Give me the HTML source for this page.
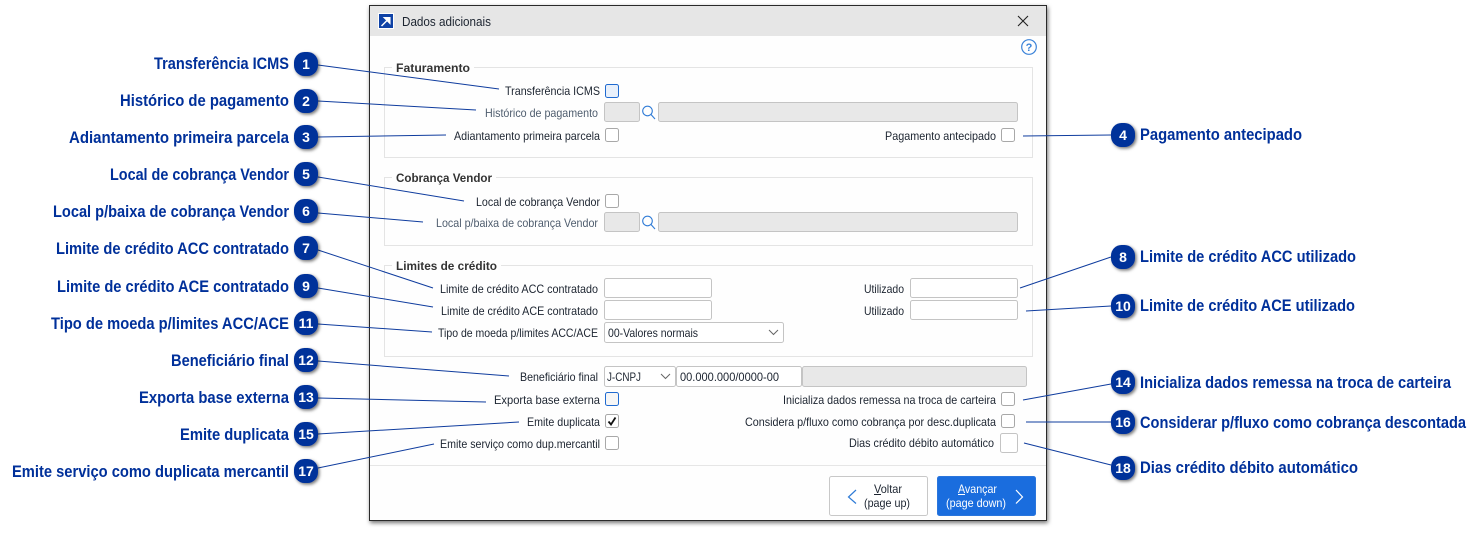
<!DOCTYPE html>
<html lang="pt"><head><meta charset="utf-8"><title>Dados adicionais</title>
<style>
html,body{margin:0;padding:0;background:#fff;width:1482px;height:537px;overflow:hidden}
svg{display:block}
text{font-family:"Liberation Sans",sans-serif}
.c{font-size:16.5px;font-weight:bold;fill:#00309a}
.l{font-size:12px;fill:#1c2430}
.d{font-size:12px;fill:#4f5d6e}
.g{font-size:12px;font-weight:bold;fill:#333}
.n{font-size:14px;font-weight:bold;fill:#fff;text-anchor:middle}
.cb{fill:#fff;stroke:#a8a8a8;stroke-width:1}
.in{fill:#fff;stroke:#c4c4c4;stroke-width:1}
.ds{fill:#e8e8e8;stroke:#c4c4c4;stroke-width:1}
.box{fill:none;stroke:#e4e4e4;stroke-width:1}
.ln{stroke:#0f3c9e;stroke-width:1;fill:none}
.b{fill:#00309a}
</style></head><body>
<svg width="1482" height="537" viewBox="0 0 1482 537" xmlns="http://www.w3.org/2000/svg">
<defs>
<filter id="s" x="-40%" y="-40%" width="190%" height="190%"><feDropShadow dx="1.5" dy="1.5" stdDeviation="1.5" flood-color="#000" flood-opacity=".55"/></filter>
<filter id="w" x="-3%" y="-3%" width="106%" height="106%"><feDropShadow dx="1" dy="2" stdDeviation="2" flood-color="#000" flood-opacity=".55"/></filter>
</defs>

<!-- dialog -->
<rect x="369.500" y="5.500" width="677" height="515" fill="#fefefe" stroke="#2a2a2a" filter="url(#w)"/>
<rect x="370" y="6" width="676" height="30" fill="#e6e6e6"/>
<rect x="378" y="13" width="16" height="16" fill="#fff"/>
<rect x="379" y="14" width="14" height="14" fill="#0f42a6"/>
<path d="M381.500 26l7-7M384.500 17.800h5.300v5.300z" stroke="#fff" stroke-width="1.500" fill="#fff"/>
<text x="402" y="26" class="l" textLength="89" lengthAdjust="spacingAndGlyphs" style="font-size:13px">Dados adicionais</text>
<path d="M1018 16l10 10M1028 16l-10 10" stroke="#222" stroke-width="1.100" fill="none"/>
<circle cx="1029" cy="47" r="7.300" fill="none" stroke="#3a82d8" stroke-width="1.200"/>
<text x="1029" y="51" text-anchor="middle" style="font-size:11px;font-weight:bold;fill:#3a82d8">?</text>

<!-- groups -->
<rect x="384.500" y="67.500" width="648" height="90" class="box"/>
<rect x="392" y="62" width="82" height="12" fill="#fefefe"/>
<text x="396" y="72" class="g" textLength="74" lengthAdjust="spacingAndGlyphs">Faturamento</text>
<rect x="384.500" y="177.500" width="648" height="68" class="box"/>
<rect x="392" y="172" width="104" height="12" fill="#fefefe"/>
<text x="396" y="182" class="g" textLength="96" lengthAdjust="spacingAndGlyphs">Cobrança Vendor</text>
<rect x="384.500" y="265.500" width="648" height="91" class="box"/>
<rect x="392" y="260" width="109" height="12" fill="#fefefe"/>
<text x="396" y="270" class="g" textLength="101" lengthAdjust="spacingAndGlyphs">Limites de crédito</text>

<!-- row labels -->
<g>
<text x="505" y="95" class="l" textLength="95" lengthAdjust="spacingAndGlyphs">Transferência ICMS</text>
<text x="485" y="117" class="d" textLength="113" lengthAdjust="spacingAndGlyphs">Histórico de pagamento</text>
<text x="454" y="140" class="l" textLength="146" lengthAdjust="spacingAndGlyphs">Adiantamento primeira parcela</text>
<text x="885" y="140" class="l" textLength="111" lengthAdjust="spacingAndGlyphs">Pagamento antecipado</text>
<text x="476" y="206" class="l" textLength="124" lengthAdjust="spacingAndGlyphs">Local de cobrança Vendor</text>
<text x="436" y="227" class="d" textLength="162" lengthAdjust="spacingAndGlyphs">Local p/baixa de cobrança Vendor</text>
<text x="440" y="293" class="l" textLength="158" lengthAdjust="spacingAndGlyphs">Limite de crédito ACC contratado</text>
<text x="441" y="315" class="l" textLength="157" lengthAdjust="spacingAndGlyphs">Limite de crédito ACE contratado</text>
<text x="438" y="337" class="l" textLength="160" lengthAdjust="spacingAndGlyphs">Tipo de moeda p/limites ACC/ACE</text>
<text x="864" y="293" class="l" textLength="40" lengthAdjust="spacingAndGlyphs">Utilizado</text>
<text x="864" y="315" class="l" textLength="40" lengthAdjust="spacingAndGlyphs">Utilizado</text>
<text x="520" y="381" class="l" textLength="78" lengthAdjust="spacingAndGlyphs">Beneficiário final</text>
<text x="494" y="404" class="l" textLength="106" lengthAdjust="spacingAndGlyphs">Exporta base externa</text>
<text x="527" y="426" class="l" textLength="73" lengthAdjust="spacingAndGlyphs">Emite duplicata</text>
<text x="440" y="448" class="l" textLength="160" lengthAdjust="spacingAndGlyphs">Emite serviço como dup.mercantil</text>
<text x="783" y="404" class="l" textLength="213" lengthAdjust="spacingAndGlyphs">Inicializa dados remessa na troca de carteira</text>
<text x="745" y="426" class="l" textLength="251" lengthAdjust="spacingAndGlyphs">Considera p/fluxo como cobrança por desc.duplicata</text>
<text x="849" y="447" class="l" textLength="145" lengthAdjust="spacingAndGlyphs">Dias crédito débito automático</text>
</g>

<!-- controls -->
<rect x="605.500" y="84.500" width="13" height="13" rx="2" fill="#e8f0fb" stroke="#1f6ad0"/>
<rect x="604.500" y="102.500" width="35" height="19" rx="2" class="ds"/>
<circle cx="647.500" cy="111" r="4.800" fill="none" stroke="#2f7bd6" stroke-width="1.100"/><path d="M651 114.500l4 4.500" stroke="#2f7bd6" stroke-width="1.100"/>
<rect x="658.500" y="102.500" width="359" height="19" rx="2" class="ds"/>
<rect x="605.500" y="128.500" width="13" height="13" rx="2" class="cb"/>
<rect x="1001.500" y="128.500" width="13" height="13" rx="2" class="cb"/>

<rect x="605.500" y="194.500" width="13" height="13" rx="2" class="cb"/>
<rect x="604.500" y="212.500" width="35" height="19" rx="2" class="ds"/>
<circle cx="647.500" cy="221" r="4.800" fill="none" stroke="#2f7bd6" stroke-width="1.100"/><path d="M651 224.500l4 4.500" stroke="#2f7bd6" stroke-width="1.100"/>
<rect x="658.500" y="212.500" width="359" height="19" rx="2" class="ds"/>

<rect x="604.500" y="278.500" width="107" height="19" rx="2" class="in"/>
<rect x="604.500" y="300.500" width="107" height="19" rx="2" class="in"/>
<rect x="910.500" y="278.500" width="107" height="19" rx="2" class="in"/>
<rect x="910.500" y="300.500" width="107" height="19" rx="2" class="in"/>
<rect x="604.500" y="322.500" width="179" height="20" rx="2" class="in"/>
<text x="608" y="337" class="l" textLength="90" lengthAdjust="spacingAndGlyphs">00-Valores normais</text>
<path d="M769 330l4.500 4.500 4.500-4.500" fill="none" stroke="#666"/>

<rect x="604.500" y="366.500" width="71" height="20" rx="2" class="in"/>
<text x="607" y="381" class="l" textLength="34" lengthAdjust="spacingAndGlyphs">J-CNPJ</text>
<path d="M661 374l4.500 4.500 4.500-4.500" fill="none" stroke="#666"/>
<rect x="676.500" y="366.500" width="125" height="20" rx="2" class="in"/>
<text x="680" y="381" class="l" textLength="99" lengthAdjust="spacingAndGlyphs">00.000.000/0000-00</text>
<rect x="802.500" y="366.500" width="224" height="20" rx="2" class="ds"/>

<rect x="605.500" y="392.500" width="13" height="13" rx="2" fill="#f6f6f6" stroke="#1f6ad0"/>
<rect x="605.500" y="414.500" width="13" height="13" rx="2" class="cb"/>
<path d="M608.500 421.500l2.500 3 4.500-7" fill="none" stroke="#111" stroke-width="1.800"/>
<rect x="605.500" y="436.500" width="13" height="13" rx="2" class="cb"/>
<rect x="1001.500" y="392.500" width="13" height="13" rx="2" class="cb"/>
<rect x="1001.500" y="414.500" width="13" height="13" rx="2" class="cb"/>
<rect x="1000.500" y="433.500" width="17" height="19" rx="2" class="in"/>

<!-- footer -->
<rect x="370" y="465" width="676" height="1" fill="#e6e6e6"/>
<rect x="829.500" y="476.500" width="98" height="39" rx="2" fill="#fff" stroke="#c8c8c8"/>
<path d="M856 490l-7.500 7 7.500 6.500" fill="none" stroke="#2f7bd6" stroke-width="1.200"/>
<text x="874" y="493" class="l" textLength="28" lengthAdjust="spacingAndGlyphs">Voltar</text>
<rect x="874" y="494" width="7" height="1" fill="#1c2430"/>
<text x="864" y="507" class="l" textLength="46" lengthAdjust="spacingAndGlyphs">(page up)</text>
<rect x="937.500" y="476.500" width="98" height="39" rx="2" fill="#1a6dde" stroke="#2a75dc"/>
<path d="M1016 490l6.500 7-6.500 6.500" fill="none" stroke="#fff" stroke-width="1.200"/>
<text x="958" y="493" style="font-size:12px;fill:#fff" textLength="39" lengthAdjust="spacingAndGlyphs">Avançar</text>
<rect x="958" y="494" width="7" height="1" fill="#fff"/>
<text x="946" y="507" style="font-size:12px;fill:#fff" textLength="60" lengthAdjust="spacingAndGlyphs">(page down)</text>

<!-- connector lines -->
<g class="ln">
<path d="M318 65L499 89"/><path d="M318 101L476 110"/><path d="M318 137L446 135"/>
<path d="M1023 136L1111 135"/><path d="M318 177L464 201"/><path d="M318 213L423 222"/>
<path d="M318 250L433 288"/><path d="M318 288L433 307"/><path d="M318 324L432 332"/>
<path d="M318 361L509 376"/><path d="M318 398L486 402"/><path d="M318 434L519 422"/>
<path d="M318 468L434 444"/><path d="M1020 288L1111 257"/><path d="M1026 311L1111 306"/>
<path d="M1023 400L1111 384"/><path d="M1026 422L1111 422"/><path d="M1024 443L1111 465"/>
</g>

<!-- callout badges -->
<g class="b" filter="url(#s)">
<rect x="294" y="52" width="24" height="24" rx="10.500"/><rect x="294" y="89" width="24" height="24" rx="10.500"/><rect x="294" y="125" width="24" height="24" rx="10.500"/>
<rect x="294" y="162" width="24" height="24" rx="10.500"/><rect x="294" y="199" width="24" height="24" rx="10.500"/><rect x="294" y="236" width="24" height="24" rx="10.500"/>
<rect x="294" y="274" width="24" height="24" rx="10.500"/><rect x="294" y="311" width="24" height="24" rx="10.500"/><rect x="294" y="348" width="24" height="24" rx="10.500"/>
<rect x="294" y="385" width="24" height="24" rx="10.500"/><rect x="294" y="422" width="24" height="24" rx="10.500"/><rect x="294" y="459" width="24" height="24" rx="10.500"/>
<rect x="1111" y="123" width="24" height="24" rx="10.500"/><rect x="1111" y="245" width="24" height="24" rx="10.500"/><rect x="1111" y="294" width="24" height="24" rx="10.500"/>
<rect x="1111" y="370" width="24" height="24" rx="10.500"/><rect x="1111" y="410" width="24" height="24" rx="10.500"/><rect x="1111" y="456" width="24" height="24" rx="10.500"/>
</g>
<text x="306" y="69" class="n">1</text><text x="306" y="106" class="n">2</text><text x="306" y="142" class="n">3</text>
<text x="306" y="179" class="n">5</text><text x="306" y="216" class="n">6</text><text x="306" y="253" class="n">7</text>
<text x="306" y="291" class="n">9</text><text x="306" y="328" class="n">11</text><text x="306" y="365" class="n">12</text>
<text x="306" y="402" class="n">13</text><text x="306" y="439" class="n">15</text><text x="306" y="476" class="n">17</text>
<text x="1123" y="140" class="n">4</text><text x="1123" y="262" class="n">8</text><text x="1123" y="311" class="n">10</text>
<text x="1123" y="387" class="n">14</text><text x="1123" y="427" class="n">16</text><text x="1123" y="473" class="n">18</text>

<!-- callout labels -->
<g>
<text x="154" y="69" class="c" textLength="135" lengthAdjust="spacingAndGlyphs">Transferência ICMS</text>
<text x="120" y="106" class="c" textLength="169" lengthAdjust="spacingAndGlyphs">Histórico de pagamento</text>
<text x="69" y="143" class="c" textLength="220" lengthAdjust="spacingAndGlyphs">Adiantamento primeira parcela</text>
<text x="110" y="180" class="c" textLength="179" lengthAdjust="spacingAndGlyphs">Local de cobrança Vendor</text>
<text x="53" y="217" class="c" textLength="236" lengthAdjust="spacingAndGlyphs">Local p/baixa de cobrança Vendor</text>
<text x="56" y="254" class="c" textLength="233" lengthAdjust="spacingAndGlyphs">Limite de crédito ACC contratado</text>
<text x="57" y="292" class="c" textLength="232" lengthAdjust="spacingAndGlyphs">Limite de crédito ACE contratado</text>
<text x="51" y="329" class="c" textLength="238" lengthAdjust="spacingAndGlyphs">Tipo de moeda p/limites ACC/ACE</text>
<text x="171" y="366" class="c" textLength="118" lengthAdjust="spacingAndGlyphs">Beneficiário final</text>
<text x="139" y="403" class="c" textLength="150" lengthAdjust="spacingAndGlyphs">Exporta base externa</text>
<text x="180" y="440" class="c" textLength="109" lengthAdjust="spacingAndGlyphs">Emite duplicata</text>
<text x="12" y="477" class="c" textLength="277" lengthAdjust="spacingAndGlyphs">Emite serviço como duplicata mercantil</text>
<text x="1140" y="140" class="c" textLength="162" lengthAdjust="spacingAndGlyphs">Pagamento antecipado</text>
<text x="1140" y="262" class="c" textLength="216" lengthAdjust="spacingAndGlyphs">Limite de crédito ACC utilizado</text>
<text x="1140" y="311" class="c" textLength="215" lengthAdjust="spacingAndGlyphs">Limite de crédito ACE utilizado</text>
<text x="1140" y="388" class="c" textLength="311" lengthAdjust="spacingAndGlyphs">Inicializa dados remessa na troca de carteira</text>
<text x="1140" y="428" class="c" textLength="326" lengthAdjust="spacingAndGlyphs">Considerar p/fluxo como cobrança descontada</text>
<text x="1140" y="473" class="c" textLength="218" lengthAdjust="spacingAndGlyphs">Dias crédito débito automático</text>
</g>
</svg>
</body></html>
